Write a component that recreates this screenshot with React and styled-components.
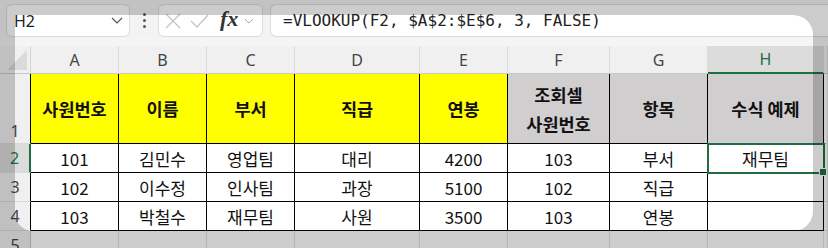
import React from 'react'
import styled, { createGlobalStyle } from 'styled-components'

const GlobalStyle = createGlobalStyle`
  html, body {
    margin: 0;
    padding: 0;
    background: #ffffff;
  }
  * {
    box-sizing: border-box;
  }
`

const GREEN = '#1e6e42'

const Screen = styled.div`
  position: relative;
  width: 828px;
  height: 248px;
  overflow: hidden;
  background: #f3f3f3;
  font-family: "Noto Sans", "Noto Sans CJK KR", sans-serif;
`

const Toolbar = styled.div`
  display: flex;
  align-items: center;
  height: 38px;
  padding: 4px 0 1px 6px;
`

const Box = styled.div`
  display: flex;
  align-items: center;
  height: 33px;
  background: #ffffff;
  border: 1px solid #dcdcdc;
  border-radius: 6px;
`

const NameBox = styled(Box)`
  width: 124px;
  padding: 0 6px 0 7px;
  justify-content: space-between;
  font-size: 16px;
  color: #222;
`

const Dots = styled.div`
  display: flex;
  flex-direction: column;
  align-items: center;
  gap: 3px;
  width: 28px;

  span {
    width: 3px;
    height: 3px;
    border-radius: 50%;
    background: #555;
  }
`

const FuncBox = styled(Box)`
  width: 105px;
  padding: 0 4px 0 6px;
  gap: 9px;
`

const Fx = styled.span`
  font-family: "Liberation Serif", "DejaVu Serif", serif;
  font-style: italic;
  font-weight: bold;
  font-size: 22px;
  line-height: 1;
  color: #333;
  margin-left: 2px;
  margin-right: -3px;
  margin-top: -3px;
`

const FormulaBox = styled(Box)`
  flex: 1;
  margin-left: 7px;
  padding-left: 12px;
  border-right: none;
  border-radius: 6px 0 0 6px;
  font-family: "DejaVu Sans Mono", "Liberation Mono", monospace;
  font-size: 16px;
  color: #222;
`

const Strip = styled.div`
  height: 8px;
  background: #f5f5f5;
`

const Sheet = styled.div`
  display: grid;
  grid-template-columns: 31px 88px 88px 88px 125px 88px 102px 98px 116px 1fr;
  grid-template-rows: 28px 70px 29px 29px 29px 29px;
  background: #ffffff;
`

const Corner = styled.div`
  display: flex;
  align-items: flex-end;
  justify-content: flex-end;
  padding: 0 3px 3px 0;
  background: #f0f0f0;
  border-right: 1px solid #d6d6d6;
  border-bottom: 1px solid #c8c8c8;
`

const ColHead = styled.div`
  display: flex;
  align-items: center;
  justify-content: center;
  font-size: 16px;
  color: ${p => (p.$selected ? GREEN : '#444')};
  background: ${p => (p.$selected ? '#dcdcdc' : '#f0f0f0')};
  border-right: 1px solid #dadada;
  border-bottom: ${p => (p.$selected ? `2px solid ${GREEN}` : '1px solid #c8c8c8')};
`

const RowHead = styled.div`
  display: flex;
  align-items: ${p => (p.$bottom ? 'flex-end' : 'center')};
  justify-content: center;
  padding-bottom: ${p => (p.$bottom ? '1px' : '0')};
  font-size: 16px;
  color: ${p => (p.$selected ? GREEN : '#444')};
  background: ${p => (p.$selected ? '#dcdcdc' : '#f0f0f0')};
  border-bottom: 1px solid #dadada;
  border-right: ${p => (p.$selected ? `2px solid ${GREEN}` : '1px solid #000')};
`

const RowHeadPlain = styled(RowHead)`
  border-right: 1px solid #c8c8c8;
`

const Cell = styled.div`
  position: relative;
  display: flex;
  align-items: center;
  justify-content: center;
  text-align: center;
  white-space: pre-line;
  line-height: 29px;
  font-family: "Noto Sans CJK KR", "Noto Sans", sans-serif;
  font-size: ${p => (p.$bold ? '17.5px' : '17px')};
  font-weight: ${p => (p.$bold ? 700 : 400)};
  color: #111;
  background: ${p => p.$bg || '#ffffff'};
  border-right: 1px solid ${p => (p.$plain ? '#e1e1e1' : '#000')};
  border-bottom: 1px solid ${p => (p.$plain ? '#e1e1e1' : '#000')};
  ${p =>
    p.$active &&
    `
    outline: 2px solid ${GREEN};
    outline-offset: -1px;
    z-index: 1;
    &::after {
      content: '';
      position: absolute;
      right: -4px;
      bottom: -4px;
      width: 6px;
      height: 6px;
      background: ${GREEN};
      border: 1px solid #fff;
    }
  `}
`

const Mask = styled.div`
  position: absolute;
  left: 15px;
  top: 15px;
  width: 798px;
  height: 216px;
  border-radius: 0 20px 20px 18px;
  box-shadow: 0 0 0 2000px rgba(0, 0, 0, 0.2);
  pointer-events: none;
  z-index: 5;
`

const Chevron = ({ w = 12, color = '#555' }) => (
  <svg width={w} height={w / 2 + 1} viewBox="0 0 12 7">
    <path d="M1 1 L6 6 L11 1" fill="none" stroke={color} strokeWidth="1.2" />
  </svg>
)

const columns = ['A', 'B', 'C', 'D', 'E', 'F', 'G', 'H', '']
const YELLOW = '#ffff00'
const GRAY = '#d0cece'

const header = ['사원번호', '이름', '부서', '직급', '연봉', '조회셀\n사원번호', '항목', '수식 예제']
const rows = [
  ['101', '김민수', '영업팀', '대리', '4200', '103', '부서', '재무팀'],
  ['102', '이수정', '인사팀', '과장', '5100', '102', '직급', ''],
  ['103', '박철수', '재무팀', '사원', '3500', '103', '연봉', ''],
]

export default function App() {
  return (
    <Screen>
      <GlobalStyle />
      <Toolbar>
        <NameBox>
          <span>H2</span>
          <Chevron />
        </NameBox>
        <Dots>
          <span />
          <span />
          <span />
        </Dots>
        <FuncBox>
          <svg width="16" height="16" viewBox="0 0 16 16">
            <path d="M1 1 L15 15 M15 1 L1 15" stroke="#c4c4c4" strokeWidth="1.3" fill="none" />
          </svg>
          <svg width="19" height="14" viewBox="0 0 19 14">
            <path d="M1 7 L7 13 L18 1" stroke="#c4c4c4" strokeWidth="1.3" fill="none" />
          </svg>
          <Fx>fx</Fx>
          <Chevron w={10} color="#aaa" />
        </FuncBox>
        <FormulaBox>=VLOOKUP(F2, $A$2:$E$6, 3, FALSE)</FormulaBox>
      </Toolbar>
      <Strip />
      <Sheet>
        <Corner>
          <svg width="20" height="20" viewBox="0 0 20 20">
            <polygon points="20,0 20,20 0,20" fill="#dadada" />
          </svg>
        </Corner>
        {columns.map((c, i) => (
          <ColHead key={i} $selected={c === 'H'}>
            {c}
          </ColHead>
        ))}

        <RowHead $bottom>1</RowHead>
        {header.map((t, i) => (
          <Cell key={i} $bold $bg={i < 5 ? YELLOW : GRAY}>
            {t}
          </Cell>
        ))}
        <Cell $plain />

        {rows.map((r, ri) => (
          <React.Fragment key={ri}>
            <RowHead $selected={ri === 0}>{ri + 2}</RowHead>
            {r.map((t, ci) => (
              <Cell key={ci} $active={ri === 0 && ci === 7}>
                {t}
              </Cell>
            ))}
            <Cell $plain />
          </React.Fragment>
        ))}

        <RowHeadPlain>5</RowHeadPlain>
        {columns.map((c, i) => (
          <Cell key={i} $plain />
        ))}
      </Sheet>
      <Mask />
    </Screen>
  )
}
